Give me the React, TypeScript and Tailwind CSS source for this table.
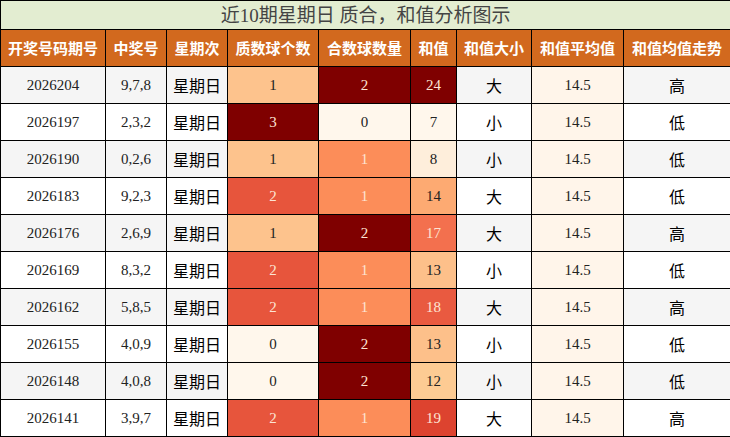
import React from 'react';

type Row = {
  issue: string;
  nums: string;
  prime: number;
  composite: number;
  sum: number;
  size: string;
  trend: string;
};

const ROWS: Row[] = [
  { issue: '2026204', nums: '9,7,8', prime: 1, composite: 2, sum: 24, size: '大', trend: '高' },
  { issue: '2026197', nums: '2,3,2', prime: 3, composite: 0, sum: 7, size: '小', trend: '低' },
  { issue: '2026190', nums: '0,2,6', prime: 1, composite: 1, sum: 8, size: '小', trend: '低' },
  { issue: '2026183', nums: '9,2,3', prime: 2, composite: 1, sum: 14, size: '大', trend: '低' },
  { issue: '2026176', nums: '2,6,9', prime: 1, composite: 2, sum: 17, size: '大', trend: '高' },
  { issue: '2026169', nums: '8,3,2', prime: 2, composite: 1, sum: 13, size: '小', trend: '低' },
  { issue: '2026162', nums: '5,8,5', prime: 2, composite: 1, sum: 18, size: '大', trend: '高' },
  { issue: '2026155', nums: '4,0,9', prime: 0, composite: 2, sum: 13, size: '小', trend: '低' },
  { issue: '2026148', nums: '4,0,8', prime: 0, composite: 2, sum: 12, size: '小', trend: '低' },
  { issue: '2026141', nums: '3,9,7', prime: 2, composite: 1, sum: 19, size: '大', trend: '高' },
];

const HEADERS = ['开奖号码期号', '中奖号', '星期次', '质数球个数', '合数球数量', '和值', '和值大小', '和值平均值', '和值均值走势'];

// heat colours, light text on the darker ones
const primeCell: Record<number, string> = {
  0: 'bg-[#fff7ec] text-[#222]',
  1: 'bg-[#fdc38d] text-[#222]',
  2: 'bg-[#e7553c] text-[#fde4d4]',
  3: 'bg-[#7f0000] text-[#fde4d4]',
};

const compositeCell: Record<number, string> = {
  0: 'bg-[#fff7ec] text-[#222]',
  1: 'bg-[#fc8d59] text-[#fde4d4]',
  2: 'bg-[#7f0000] text-[#fde4d4]',
};

const sumCell: Record<number, string> = {
  7: 'bg-[#fff7ec] text-[#222]',
  8: 'bg-[#feeedb] text-[#222]',
  12: 'bg-[#fdcb93] text-[#222]',
  13: 'bg-[#fdc08a] text-[#222]',
  14: 'bg-[#fdaa72] text-[#222]',
  17: 'bg-[#f3704e] text-[#fde4d4]',
  18: 'bg-[#e95a40] text-[#fde4d4]',
  19: 'bg-[#dd432f] text-[#fde4d4]',
  24: 'bg-[#7f0000] text-[#fde4d4]',
};

const td = 'border border-black text-center p-0 h-[37px]';

export default function App() {
  return (
    <div className="w-[730px] h-[437px] overflow-hidden bg-white font-['Liberation_Serif','Noto_Sans_CJK_SC',serif]">
      <table className="w-[730px] table-fixed border-collapse">
        <colgroup>
          <col className="w-[105px]" />
          <col className="w-[61px]" />
          <col className="w-[61px]" />
          <col className="w-[91px]" />
          <col className="w-[92px]" />
          <col className="w-[46px]" />
          <col className="w-[75px]" />
          <col className="w-[92px]" />
          <col className="w-[107px]" />
        </colgroup>
        <thead>
          <tr>
            <th colSpan={9} className="border border-black bg-[#e3edd1] h-[29px] p-0 text-[19px] font-normal text-[#444] leading-none">
              近10期星期日 质合，和值分析图示
            </th>
          </tr>
          <tr>
            {HEADERS.map((h) => (
              <th key={h} className="border border-black bg-[#d2691e] h-[37px] p-0 text-[15px] font-bold text-white font-['Noto_Sans_CJK_SC',sans-serif] whitespace-nowrap">
                {h}
              </th>
            ))}
          </tr>
        </thead>
        <tbody className="text-[15px]">
          {ROWS.map((r, i) => {
            const stripe = i % 2 === 0 ? 'bg-[#f5f5f5]' : 'bg-white';
            return (
              <tr key={r.issue}>
                <td className={`${td} ${stripe} text-[#222]`}>{r.issue}</td>
                <td className={`${td} ${stripe} text-[#222]`}>{r.nums}</td>
                <td className={`${td} ${stripe} text-black text-[16px] font-['Noto_Sans_CJK_SC',sans-serif]`}>星期日</td>
                <td className={`${td} ${primeCell[r.prime]}`}>{r.prime}</td>
                <td className={`${td} ${compositeCell[r.composite]}`}>{r.composite}</td>
                <td className={`${td} ${sumCell[r.sum]}`}>{r.sum}</td>
                <td className={`${td} ${stripe} text-black text-[16px] font-['Noto_Sans_CJK_SC',sans-serif]`}>{r.size}</td>
                <td className={`${td} bg-[#fff5ea] text-[#222]`}>14.5</td>
                <td className={`${td} ${stripe} text-black text-[16px] font-['Noto_Sans_CJK_SC',sans-serif]`}>{r.trend}</td>
              </tr>
            );
          })}
        </tbody>
      </table>
    </div>
  );
}
